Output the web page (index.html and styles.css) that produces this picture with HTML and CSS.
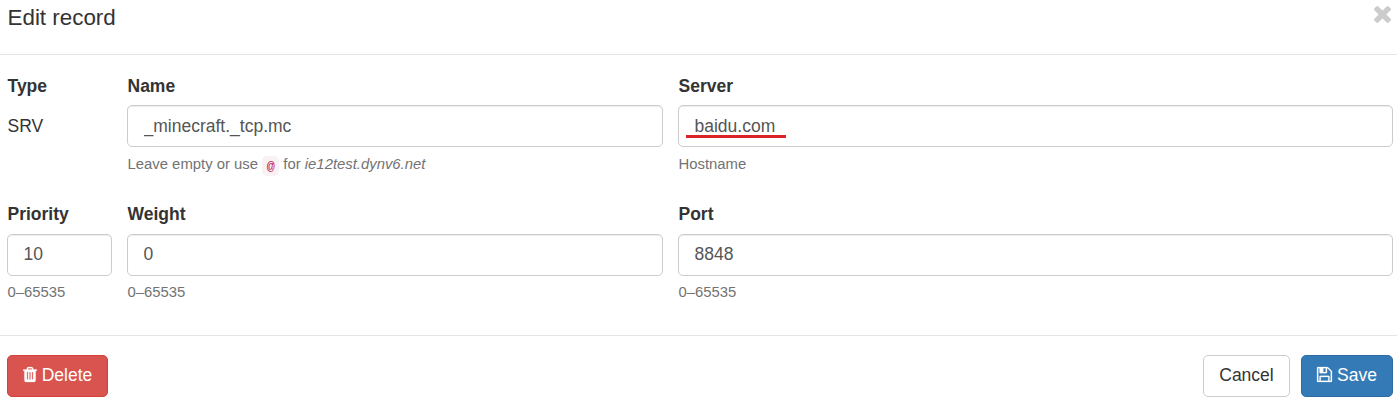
FILE: index.html
```html
<!DOCTYPE html>
<html lang="en">
<head>
<meta charset="utf-8">
<title>Edit record</title>
<link rel="stylesheet" href="styles.css">
</head>
<body>
<form class="modal">
  <header class="modal-header">
    <h1 class="modal-title">Edit record</h1>
    <button class="close" type="button" aria-label="Close"><svg viewBox="302 366 1188 1188"><path d="M1490 1322q0 40-28 68l-136 136q-28 28-68 28t-68-28l-294-294-294 294q-28 28-68 28t-68-28l-136-136q-28-28-28-68t28-68l294-294-294-294q-28-28-28-68t28-68l136-136q28-28 68-28t68 28l294 294 294-294q28-28 68-28t68 28l136 136q28 28 28 68t-28 68l-294 294 294 294q28 28 28 68z"/></svg></button>
  </header>
  <main class="modal-body">
    <div class="row">
      <div class="field">
        <span class="label">Type</span>
        <p class="static">SRV</p>
      </div>
      <div class="field">
        <label class="label" for="name">Name</label>
        <input class="control" id="name" value="_minecraft._tcp.mc" spellcheck="false">
        <p class="help">Leave empty or use <code class="code">@</code> for <em>ie12test.dynv6.net</em></p>
      </div>
      <div class="field">
        <label class="label" for="server">Server</label>
        <div class="marked"><input class="control" id="server" value="baidu.com" spellcheck="false"><span class="marker"></span></div>
        <p class="help">Hostname</p>
      </div>
    </div>
    <div class="row">
      <div class="field">
        <label class="label" for="priority">Priority</label>
        <input class="control" id="priority" value="10">
        <p class="help">0–65535</p>
      </div>
      <div class="field">
        <label class="label" for="weight">Weight</label>
        <input class="control" id="weight" value="0">
        <p class="help">0–65535</p>
      </div>
      <div class="field">
        <label class="label" for="port">Port</label>
        <input class="control" id="port" value="8848">
        <p class="help">0–65535</p>
      </div>
    </div>
  </main>
  <footer class="modal-footer">
    <button class="btn btn-danger" type="button"><svg class="icon-trash" viewBox="192 128 1408 1536"><path d="M704 1376v-704q0-14-9-23t-23-9h-64q-14 0-23 9t-9 23v704q0 14 9 23t23 9h64q14 0 23-9t9-23zm256 0v-704q0-14-9-23t-23-9h-64q-14 0-23 9t-9 23v704q0 14 9 23t23 9h64q14 0 23-9t9-23zm256 0v-704q0-14-9-23t-23-9h-64q-14 0-23 9t-9 23v704q0 14 9 23t23 9h64q14 0 23-9t9-23zm-544-992h448l-48-117q-7-9-17-11h-317q-10 2-17 11zm928 32v64q0 14-9 23t-23 9h-96v948q0 83-47 143.5t-113 60.5h-832q-66 0-113-58.5t-47-141.5v-952h-96q-14 0-23-9t-9-23v-64q0-14 9-23t23-9h309l70-167q15-37 54-63t79-26h320q40 0 79 26t54 63l70 167h309q14 0 23 9t9 23z"/></svg>Delete</button>
    <div class="actions">
      <button class="btn btn-default" type="button">Cancel</button>
      <button class="btn btn-primary" type="button"><svg class="icon-save" viewBox="128 128 1536 1536"><path d="M512 1536h768v-384h-768v384zm896 0h128v-896q0-14-10-38.5t-20-34.5l-281-281q-10-10-34-20t-39-10v416q0 40-28 68t-68 28h-576q-40 0-68-28t-28-68v-416h-128v1280h128v-416q0-40 28-68t68-28h832q40 0 68 28t28 68v416zm-384-928v-320q0-13-9.5-22.5t-22.5-9.5h-192q-13 0-22.5 9.5t-9.5 22.5v320q0 13 9.5 22.5t22.5 9.5h192q13 0 22.5-9.5t9.5-22.5zm640 32v928q0 40-28 68t-68 28h-1344q-40 0-68-28t-28-68v-1344q0-40 28-68t68-28h928q40 0 88 20t76 48l280 280q28 28 48 76t20 88z"/></svg>Save</button>
    </div>
  </footer>
</form>
</body>
</html>
```
FILE: styles.css
```css
* {
  box-sizing: border-box;
}

body {
  margin: 0;
  background: #fff;
  color: #333;
  font: 17.5px/25px "Liberation Sans", Arial, sans-serif;
}

.modal {
  height: 402px;
  overflow: hidden;
}

.modal-header {
  display: flex;
  justify-content: space-between;
  align-items: flex-start;
  height: 55px;
  padding: 6px 6px 0 7.5px;
  border-bottom: 1px solid #e5e5e5;
}

.modal-title {
  margin: 0;
  font-size: 22.4px;
  font-weight: 400;
  line-height: 24px;
}

.close {
  padding: 0;
  border: 0;
  background: none;
}

.close svg {
  display: block;
  width: 17px;
  height: 17px;
  fill: #ccc;
}

.modal-body {
  height: 280px;
  padding: 19px 4px 0 7px;
}

.row {
  display: grid;
  grid-template-columns: 105px 536px 715px;
  column-gap: 15px;
  height: 128px;
}

.row + .row .label {
  height: 32px;
}

.row + .row .control {
  padding-bottom: 2px;
}

.row + .row .help {
  margin-top: 4px;
}

.field {
  display: flex;
  flex-direction: column;
}

.label {
  height: 31px;
  padding-left: 0.5px;
  font-weight: 700;
}

.static {
  margin: 9px 0 0;
  padding-left: 0.5px;
}

.control {
  display: block;
  width: 100%;
  height: 42px;
  padding: 0 15.5px;
  border: 1px solid #ccc;
  border-radius: 5px;
  background: #fff;
  box-shadow: inset 0 1px 1px rgba(0, 0, 0, 0.075);
  color: #555;
  font: inherit;
}

.marked {
  position: relative;
}

.marker {
  position: absolute;
  left: 8px;
  top: 30px;
  width: 100px;
  height: 3px;
  background: #dc2328;
}

.help {
  margin: 5px 0 0;
  padding-left: 0.5px;
  color: #737373;
  font-size: 14.875px;
}

.code {
  padding: 2.5px 4.5px;
  border-radius: 5px;
  background: #f9f2f4;
  color: #c7254e;
  font: 13.4px "Liberation Mono", monospace;
}

.modal-footer {
  display: flex;
  justify-content: space-between;
  height: 67px;
  padding: 19px 4px 0 7px;
  border-top: 1px solid #e5e5e5;
}

.actions {
  display: flex;
  gap: 11px;
}

.btn {
  display: flex;
  align-items: center;
  justify-content: center;
  height: 42px;
  padding: 0 0 2px;
  border: 1px solid;
  border-radius: 5px;
  font: inherit;
}

.btn svg {
  flex: none;
  margin-bottom: 1px;
  fill: currentColor;
  stroke: currentColor;
  stroke-width: 24;
  overflow: visible;
}

.btn-danger {
  width: 101px;
  border-color: #d43f3a;
  background: #d9534f;
  color: #fff;
}

.btn-default {
  width: 87px;
  border-color: #ccc;
  background: #fff;
  color: #333;
}

.btn-primary {
  width: 92px;
  border-color: #2e6da4;
  background: #337ab7;
  color: #fff;
}

.icon-trash {
  width: 14px;
  height: 15px;
  margin-right: 5px;
}

.icon-save {
  width: 15px;
  height: 15px;
  margin-right: 5px;
}
```
